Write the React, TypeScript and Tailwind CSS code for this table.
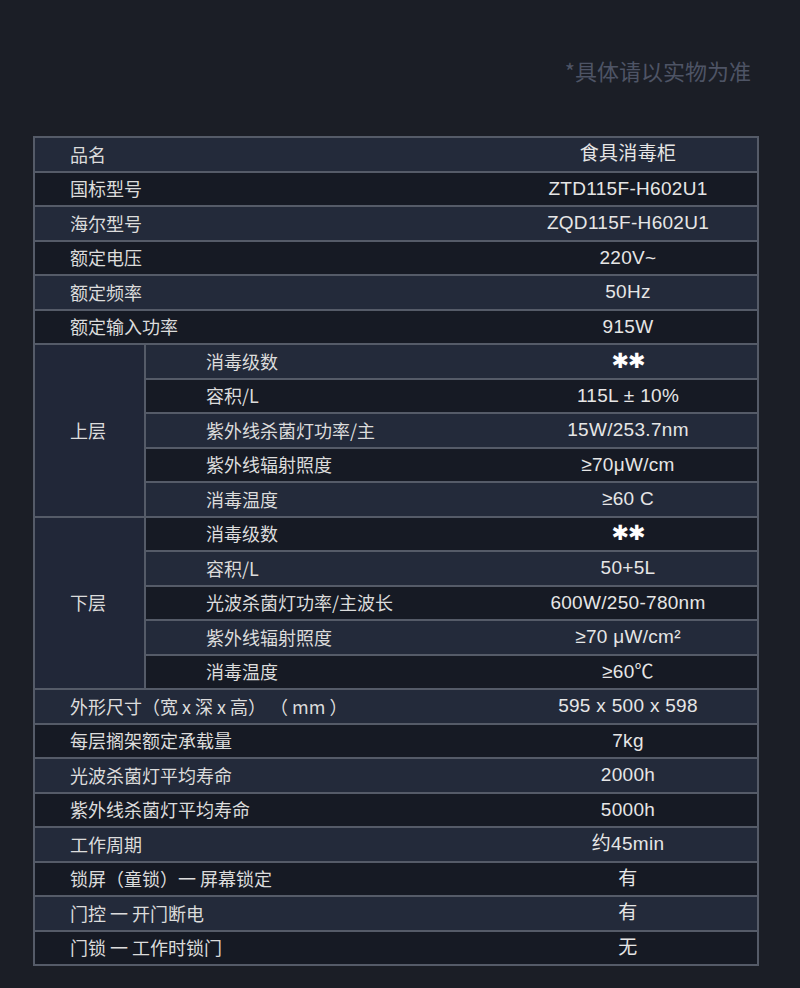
type Row = { label: string; value: string }

const TOP: Row[] = [
  { label: '品名', value: '食具消毒柜' },
  { label: '国标型号', value: 'ZTD115F-H602U1' },
  { label: '海尔型号', value: 'ZQD115F-H602U1' },
  { label: '额定电压', value: '220V~' },
  { label: '额定频率', value: '50Hz' },
  { label: '额定输入功率', value: '915W' },
]

const UPPER: Row[] = [
  { label: '消毒级数', value: '**' },
  { label: '容积/L', value: '115L ± 10%' },
  { label: '紫外线杀菌灯功率/主', value: '15W/253.7nm' },
  { label: '紫外线辐射照度', value: '≥70μW/cm' },
  { label: '消毒温度', value: '≥60 C' },
]

const LOWER: Row[] = [
  { label: '消毒级数', value: '**' },
  { label: '容积/L', value: '50+5L' },
  { label: '光波杀菌灯功率/主波长', value: '600W/250-780nm' },
  { label: '紫外线辐射照度', value: '≥70 μW/cm²' },
  { label: '消毒温度', value: '≥60℃' },
]

const BOTTOM: Row[] = [
  { label: '外形尺寸（宽 x 深 x 高） （ mm ）', value: '595 x 500 x 598' },
  { label: '每层搁架额定承载量', value: '7kg' },
  { label: '光波杀菌灯平均寿命', value: '2000h' },
  { label: '紫外线杀菌灯平均寿命', value: '5000h' },
  { label: '工作周期', value: '约45min' },
  { label: '锁屏（童锁）一 屏幕锁定', value: '有' },
  { label: '门控 一 开门断电', value: '有' },
  { label: '门锁 一 工作时锁门', value: '无' },
]

// filas alternas: par = claro, impar = oscuro
const rowBg = (i: number) => (i % 2 === 0 ? 'bg-[#232a3a]' : 'bg-[#161a24]')

function Value({ value }: { value: string }) {
  return (
    <div className="w-[258px] flex items-center justify-center text-[19px] tracking-[0.3px] text-[#e6e6e6] font-['Liberation_Sans','Noto_Sans_CJK_SC',sans-serif]">
      {value === '**' ? (
        <span className="text-[21px] font-bold text-white tracking-[-1px] font-['DejaVu_Sans',sans-serif]">✱✱</span>
      ) : (
        value
      )}
    </div>
  )
}

/** Fila etiqueta + valor, sin divisor vertical entre ambos. */
function Line({ row, idx, full }: { row: Row; idx: number; full?: boolean }) {
  return (
    <div className={`${rowBg(idx)} ${full ? 'col-span-2 pl-[35px]' : 'pl-[60px]'} flex`}>
      <div className="flex-1 flex items-center text-[18px] text-[#dcdcdc] font-['Noto_Sans_CJK_SC',sans-serif]">
        {row.label}
      </div>
      <Value value={row.value} />
    </div>
  )
}

function Group({ name, rows, start }: { name: string; rows: Row[]; start: number }) {
  return (
    <>
      <div className="row-span-5 bg-[#212738] flex items-center pl-[35px] text-[18px] text-[#dcdcdc] font-['Noto_Sans_CJK_SC',sans-serif]">
        {name}
      </div>
      {rows.map((r, i) => (
        <Line key={`${name}-${i}`} row={r} idx={start + i} />
      ))}
    </>
  )
}

export default function App() {
  return (
    <div className="min-h-screen w-[800px] bg-[#1b1e26]">
      <div className="h-[136px] pt-[55px] pr-[49px] text-right text-[22px] leading-[30px] text-[#4e5465] font-['Noto_Sans_CJK_SC',sans-serif]">
        *具体请以实物为准
      </div>

      <div className="ml-[33px] w-[726px] grid grid-cols-[109px_611px] auto-rows-[32.5px] gap-[2px] p-[2px] bg-[#555b68]">
        {TOP.map((r, i) => (
          <Line key={r.label} row={r} idx={i} full />
        ))}
        <Group name="上层" rows={UPPER} start={6} />
        <Group name="下层" rows={LOWER} start={11} />
        {BOTTOM.map((r, i) => (
          <Line key={r.label} row={r} idx={16 + i} full />
        ))}
      </div>
    </div>
  )
}
